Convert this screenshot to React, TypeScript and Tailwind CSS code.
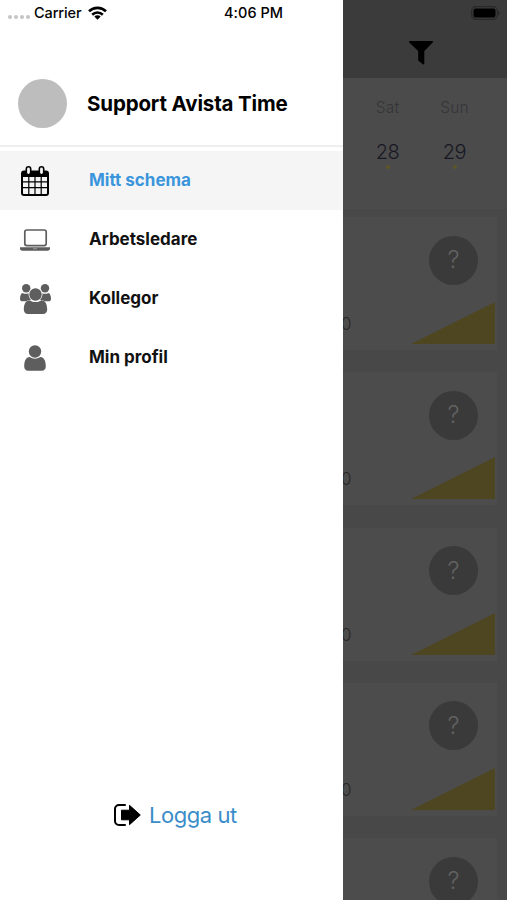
import clsx from "clsx";
import type { ReactNode } from "react";

function CalendarIcon() {
  return (
    <svg viewBox="0 0 28 30" className="w-7 h-[30px]">
      <path
        fillRule="evenodd"
        d="M3 4.500h22a3 3 0 0 1 3 3v19.500a3 3 0 0 1-3 3H3a3 3 0 0 1-3-3V7.500a3 3 0 0 1 3-3ZM2 11v4.300h5.200V11ZM8.400 11v4.300h5V11ZM14.600 11v4.300h5V11ZM20.800 11v4.300H26V11ZM2 16.500v4.600h5.200v-4.600ZM8.400 16.500v4.600h5v-4.600ZM14.600 16.500v4.600h5v-4.600ZM20.800 16.500v4.600H26v-4.600ZM2 22.300v4.900q0 .8.8.8h4.400v-5.700ZM8.400 22.300V28h5v-5.700ZM14.600 22.300V28h5v-5.700ZM20.800 22.300V28h4.400q.8 0 .8-.8v-4.900Z"
      />
      <rect x="5.300" y=".8" width="4.400" height="8" rx="2.200" fill="#f5f5f5" stroke="#000" strokeWidth="1.600" />
      <rect x="18.300" y=".8" width="4.400" height="8" rx="2.200" fill="#f5f5f5" stroke="#000" strokeWidth="1.600" />
    </svg>
  );
}

function LaptopIcon() {
  return (
    <svg viewBox="0 0 30 22" className="w-[30px] h-[22px]">
      <rect x="4.800" y="1" width="21.400" height="15.600" rx="2" fill="none" stroke="#5e5e5e" strokeWidth="1.700" />
      <path fill="#5e5e5e" d="M0 18.300h30v1.500c0 1-1 1.900-2.400 1.900H2.400C1 21.700 0 20.800 0 19.800Z" />
      <path stroke="#aaa" strokeWidth=".8" d="M13 19.700h4" />
    </svg>
  );
}

function UsersIcon() {
  return (
    <svg viewBox="0 0 31 30" className="w-[31px] h-[30px]" fill="#5e5e5e">
      <circle cx="6.200" cy="4.300" r="4.200" />
      <circle cx="25" cy="4.300" r="4.200" />
      <path d="M2.500 9c2 1 5 1.200 6 .3 0 3.500 1 5 2.500 6.500-2 0-3.800.9-4.800 1.500H2.500C1 17.300 0 16.500 0 15c0-3 .7-5.300 2.500-6ZM28.500 9c-2 1-5 1.200-6 .3 0 3.500-1 5-2.500 6.500 2 0 3.800.9 4.800 1.500h3.700c1.500 0 2.500-.8 2.500-2.300 0-3-.7-5.300-2.500-6Z" />
      <circle cx="15.500" cy="10.500" r="6.200" />
      <path d="M9.500 16.200c4 2.500 8 2.500 12 0 4 0 5.700 4.500 5.700 9.300 0 2.700-1.700 4.500-4.200 4.500H8c-2.500 0-4.200-1.800-4.200-4.500 0-4.800 1.700-9.300 5.700-9.300Z" />
    </svg>
  );
}

function UserIcon() {
  return (
    <svg viewBox="0 0 22 26" className="w-[22px] h-[26px]" fill="#5e5e5e">
      <circle cx="11" cy="6.500" r="6.200" />
      <path d="M5.800 12c3.400 2.300 7 2.300 10.400 0 4.200.2 5.600 4.500 5.600 9.500 0 2.500-1.600 4.200-3.800 4.200H4C1.800 25.700.2 24 .2 21.500c0-5 1.400-9.300 5.600-9.500Z" />
    </svg>
  );
}

function WifiIcon() {
  return (
    <svg viewBox="0 0 19 14" className="w-[19px] h-[14px]">
      <path fill="none" stroke="#000" strokeWidth="2.600" d="M1 5.300a12.200 12.200 0 0 1 17 0M4.200 8.700a7.600 7.600 0 0 1 10.600 0" />
      <path d="M9.500 13.800 6.300 10.600a4.600 4.600 0 0 1 6.400 0Z" />
    </svg>
  );
}

function LogoutIcon() {
  return (
    <svg viewBox="0 0 27 22" className="w-[27px] h-[22px]">
      <path fill="none" stroke="#000" strokeWidth="2" strokeLinecap="round" d="M11 1H5a4 4 0 0 0-4 4v12a4 4 0 0 0 4 4h6" />
      <path stroke="#000" strokeLinejoin="round" d="M7.500 6.200h8V1.300L26.300 11l-10.800 9.700v-4.900h-8Z" />
    </svg>
  );
}

const menu: { label: string; icon: ReactNode; active?: boolean }[] = [
  { label: "Mitt schema", icon: <CalendarIcon />, active: true },
  { label: "Arbetsledare", icon: <LaptopIcon /> },
  { label: "Kollegor", icon: <UsersIcon /> },
  { label: "Min profil", icon: <UserIcon /> },
];

const days = [
  { name: "Sat", date: 28 },
  { name: "Sun", date: 29 },
];

function Drawer() {
  return (
    <aside className="w-[343px] h-full shrink-0 bg-white flex flex-col">
      <div className="h-[26px] pl-2 flex items-center text-[14.500px] font-medium leading-none tracking-[-0.1px]">
        <div className="flex gap-[2px] mt-2">
          {[0, 1, 2, 3].map((i) => (
            <span key={i} className="size-[4px] rounded-full bg-[#c4c4c4]" />
          ))}
        </div>
        <span className="ml-1 w-[49px]">Carrier</span>
        <div className="ml-[5px]">
          <WifiIcon />
        </div>
        <span className="ml-[117px] whitespace-nowrap tracking-[0.05px]">4:06 PM</span>
      </div>
      <div className="h-[119px] pt-[53px] pl-[18px] flex items-start">
        <div className="size-[49px] rounded-full bg-[#bdbdbd]" />
        <h1 className="ml-5 leading-[49px] text-[20.500px] font-bold tracking-[-0.15px] whitespace-nowrap">
          Support Avista Time
        </h1>
      </div>
      <div className="h-[2px] bg-[#efefef]" />
      <nav className="pt-[4px]">
        {menu.map((item) => (
          <a
            key={item.label}
            className={clsx(
              "h-[59px] flex items-center text-[17px] font-bold",
              item.active ? "bg-[#f5f5f5] text-[#3b95dc]" : "text-[#111]"
            )}
          >
            <span className="ml-[19px] w-[32px] flex justify-center">{item.icon}</span>
            <span className="ml-[38px] mt-px">{item.label}</span>
          </a>
        ))}
      </nav>
      <a className="mt-auto mb-[69px] ml-[114px] flex items-center text-[22px] leading-8 tracking-[-0.45px] text-[#3a8cc8]">
        <LogoutIcon />
        <span className="ml-2">Logga ut</span>
      </a>
    </aside>
  );
}

function ShiftCard() {
  return (
    <div className="w-[154px] h-[133px] shrink-0 bg-[#4c4c4c] flex flex-col">
      <div className="mt-[18.500px] mr-[19px] self-end size-[49px] rounded-full bg-[#3a3a3a] text-[#626262] text-[24px] font-light flex items-center justify-center">
        ?
      </div>
      <div className="mt-[17.500px] flex justify-between">
        <span className="-ml-[2px] mt-[12px] text-[17px] leading-5 font-light text-[#272727]">0</span>
        <svg viewBox="0 0 84 42" className="w-[84px] h-[42px] mr-[2px]">
          <path fill="#4d4620" d="M0 42 84 0v42Z" />
        </svg>
      </div>
    </div>
  );
}

function Schedule() {
  return (
    <main className="flex-1 h-full overflow-hidden flex flex-col bg-[#484848]">
      <header className="h-[78px] shrink-0 bg-[#3b3b3b] flex flex-col">
        <div className="h-[26px] pr-[7px] flex items-center justify-end">
          <svg viewBox="0 0 30 14" className="w-[30px] h-[14px]">
            <rect x="1.700" y=".7" width="25.600" height="12.600" rx="4" fill="none" stroke="#282828" strokeWidth="1.200" />
            <rect x="3.500" y="2.500" width="22" height="9" rx="2" />
            <path fill="#222" d="M28.300 4.600q2.400 2.400 0 4.800Z" />
          </svg>
        </div>
        <svg viewBox="0 0 24 24" className="ml-[66px] mt-[15px] w-6 h-6">
          <path d="M.7 0h22.600q1.100.4.400 1.500L15.300 10v12.500q-.3 1.300-1.500.8L9.200 19.500V10L.3 1.500Q-.3.400.7 0Z" />
        </svg>
      </header>
      <div className="h-[131px] shrink-0 bg-[#4b4b4b] flex pl-[11px]">
        {days.map((day) => (
          <div key={day.name} className="w-[67px] pt-5 flex flex-col items-center">
            <span className="text-[15.500px] leading-5 font-light tracking-[0.2px] text-[#353539]">{day.name}</span>
            <span className="mt-[22px] text-[20px] leading-6 font-light tracking-[-0.5px] text-[#181824]">
              {day.date}
            </span>
            <span className="mt-[1px] size-[4px] rounded-full bg-[#5e5626]" />
          </div>
        ))}
      </div>
      <div className="mt-2 flex flex-col gap-[22.250px]">
        {[0, 1, 2, 3, 4].map((i) => (
          <ShiftCard key={i} />
        ))}
      </div>
    </main>
  );
}

export default function App() {
  return (
    <div className="w-[507px] h-[900px] overflow-hidden flex text-black font-['Inter','Liberation_Sans',sans-serif]">
      <Drawer />
      <Schedule />
    </div>
  );
}
